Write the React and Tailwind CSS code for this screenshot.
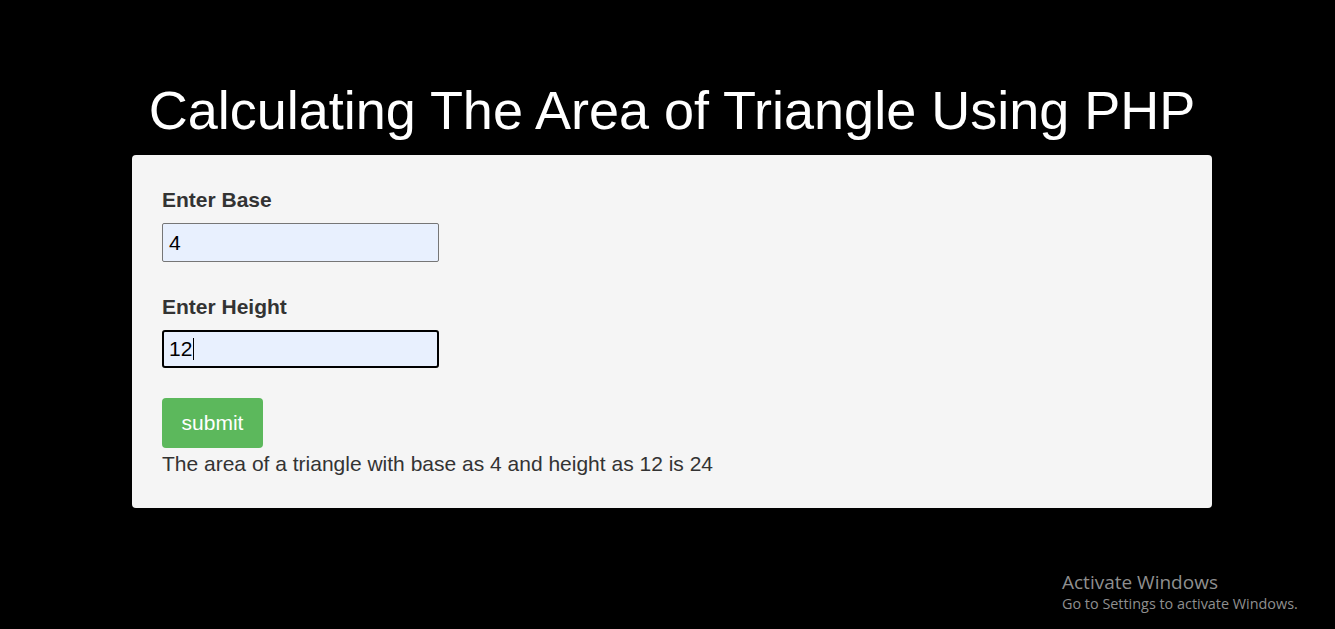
export default function App() {
  return (
    <div className="min-h-[629px] w-full bg-black relative" style={{ fontFamily: '"Liberation Sans", Arial, sans-serif' }}>
      <div className="pt-[78px]">
        <h1 className="text-center text-white text-[54px] leading-[64px] font-normal mb-[13px] pl-[9px]">
          Calculating The Area of Triangle Using PHP
        </h1>
        <div className="ml-[132px] w-[1080px] bg-[#f5f5f5] rounded-[4px] pt-[33px] pb-[32px] px-[30px] text-[#333]">
          <div className="text-[21px] leading-[24px] font-bold">Enter Base</div>
          <div className="mt-[11px] w-[277px] h-[39px] border border-[#767676] rounded-[2px] bg-[#e8f0fe] flex items-center px-[6px] text-[21px] text-black">4</div>
          <div className="mt-[33px] text-[21px] leading-[24px] font-bold">Enter Height</div>
          <div className="mt-[11px] w-[277px] h-[38px] border-2 border-black rounded-[3px] bg-[#e8f0fe] flex items-center px-[5px] text-[21px] text-black">
            12<span className="inline-block w-px h-[22px] bg-black ml-px"></span>
          </div>
          <div className="mt-[30px] w-[101px] h-[50px] rounded-[4px] bg-[#5cb85c] text-white text-[21px] flex items-center justify-center">submit</div>
          <div className="mt-[4px] text-[21px] leading-[24px]">The area of a triangle with base as 4 and height as 12 is 24</div>
        </div>
      </div>
      <div className="absolute left-[1062px] top-[570px] text-[#8f8f8f]" style={{ fontFamily: '"Open Sans", "Noto Sans", sans-serif' }}>
        <div className="text-[19px] leading-[24px]">Activate Windows</div>
        <div className="text-[14.4px] leading-[20px]">Go to Settings to activate Windows.</div>
      </div>
    </div>
  );
}
